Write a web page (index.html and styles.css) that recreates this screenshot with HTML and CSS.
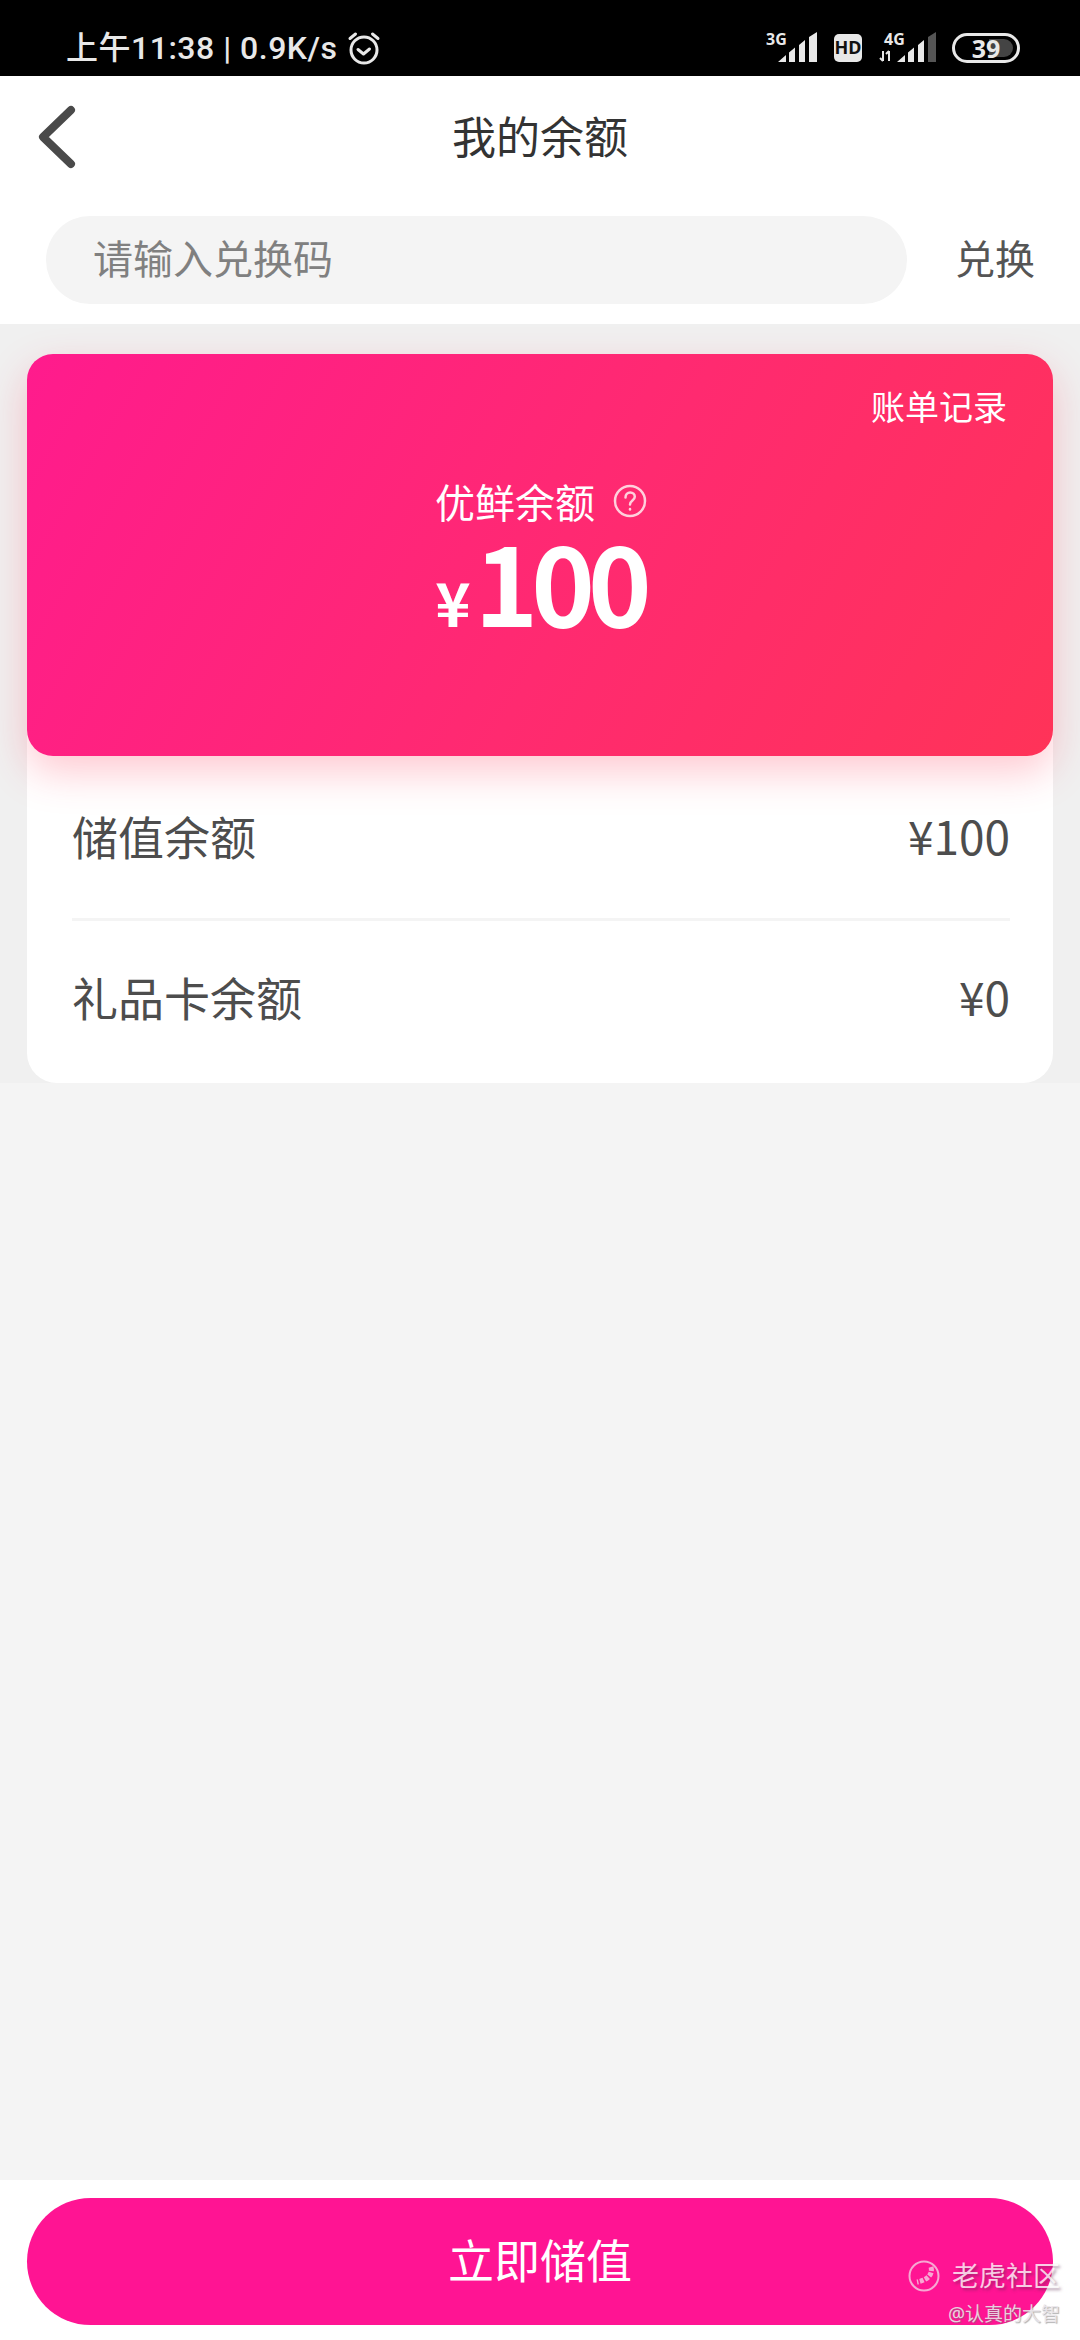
FILE: index.html
```html
<!DOCTYPE html>
<html lang="zh-CN">
<head>
    <meta charset="UTF-8">
    <meta name="viewport" content="width=device-width, initial-scale=1.0">
    <title>我的余额</title>
    <link rel="stylesheet" href="styles.css">
</head>
<body>
    <div class="status-bar">
        <div class="status-left">
            <span class="status-text">上午11:38 | 0.9K/s</span>
            <svg class="alarm" width="34" height="34" viewBox="0 0 34 34" fill="none" stroke="#e8e8e8" stroke-linecap="round" stroke-linejoin="round">
                <circle cx="17" cy="19" r="13" stroke-width="3"/>
                <path d="M11 18.500l5.500 4.500 6-5" stroke-width="3"/>
                <path d="M3 7.500L8.500 3M31 7.500L25.500 3" stroke-width="3"/>
            </svg>
        </div>
        <div class="status-right">
            <svg class="signal" width="53" height="40" viewBox="0 -8 53 40">
                <text class="net-label" x="0" y="13">3G</text>
                <path class="bar" d="M12 30l8-7v7zM23 30V20.500l6-5V30zM33 30V13l6-5V30zM43 30V5l8-5v30z"/>
            </svg>
            <svg width="28" height="28" viewBox="0 0 28 28">
                <rect width="28" height="28" rx="5" fill="#e8e8e8"/>
                <text class="hd-label" x="14" y="20" text-anchor="middle">HD</text>
            </svg>
            <svg class="signal" width="60" height="40" viewBox="0 -8 60 40">
                <text class="net-label" x="7" y="13">4G</text>
                <path d="M6 19v10M3 26l3 3M12 29V19M9 22l3-3" stroke="#e8e8e8" stroke-width="2" fill="none"/>
                <path class="bar" d="M20 30l8-7v7zM31 30V20.500l6-5V30zM41 30V13l6-5V30z"/>
                <path d="M51 30V5l8-5v30z" fill="#555"/>
            </svg>
            <div class="battery">
                <div class="battery-fill"></div>
                <span class="battery-num">39</span>
            </div>
        </div>
    </div>

    <div class="nav-bar">
        <svg class="back" width="40" height="66" viewBox="0 0 40 66" fill="none" stroke="#4a4a4a" stroke-width="8" stroke-linecap="round" stroke-linejoin="round">
            <path d="M34 6L6 33l28 27"/>
        </svg>
        <h1 class="nav-title">我的余额</h1>
    </div>

    <div class="redeem-row">
        <div class="redeem-input">请输入兑换码</div>
        <div class="redeem-btn">兑换</div>
    </div>

    <main class="content">
        <section class="balance-section">
            <div class="balance-card">
                <div class="bill-link">账单记录</div>
                <div class="balance-label">
                    <span>优鲜余额</span>
                    <svg width="34" height="34" viewBox="0 0 34 34" fill="none" stroke="#ffd0dc" stroke-width="2.500" stroke-linecap="round">
                        <circle cx="17" cy="17" r="15"/>
                        <path d="M12.500 13.500c0-3 2-5 4.700-5s4.600 1.800 4.600 4.300c0 3.700-4.800 3.800-4.800 7.700"/>
                        <path d="M17 25v.500"/>
                    </svg>
                </div>
                <div class="balance-amount"><span class="yen">¥</span><span class="amount-num">100</span></div>
            </div>
            <div class="detail-card">
                <div class="detail-row row-first">
                    <span>储值余额</span>
                    <span class="detail-value">¥100</span>
                </div>
                <div class="detail-row row-last">
                    <span>礼品卡余额</span>
                    <span class="detail-value">¥0</span>
                </div>
            </div>
        </section>
    </main>

    <footer class="footer">
        <div class="recharge-btn">立即储值</div>
    </footer>

    <!-- marca d'agua por cima do botao -->
    <div class="watermark">
        <div class="wm-top">
            <svg width="32" height="32" viewBox="0 0 32 32" fill="none" stroke="#f7a8d3" stroke-width="2">
                <circle cx="16" cy="16" r="14.500"/>
                <path d="M23 7c2 7-3 13-14 15" stroke-width="5" stroke-dasharray="4 1.500"/>
            </svg>
            <span class="wm-brand">老虎社区</span>
        </div>
        <div class="wm-user">@认真的大智</div>
    </div>
</body>
</html>
```

FILE: styles.css
```css
/* Pagina de saldo */
* {
    margin: 0;
    padding: 0;
    box-sizing: border-box;
}
body {
    position: relative;
    width: 1080px;
    height: 2340px;
    display: flex;
    flex-direction: column;
    overflow: hidden;
    background-color: #fff;
    color: #333;
    font-family: "Noto Sans", "Noto Sans CJK SC", sans-serif;
}

/* Barra de status */
.status-bar {
    height: 76px;
    flex-shrink: 0;
    display: flex;
    justify-content: space-between;
    align-items: center;
    padding: 20px 60px 0 66px;
    background-color: #000;
    color: #e8e8e8;
}
.status-left {
    display: flex;
    align-items: center;
    gap: 9px;
}
.status-text {
    padding-bottom: 6px;
    font-family: Roboto, "Noto Sans CJK SC", sans-serif;
    font-size: 32px;
    font-weight: 500;
    letter-spacing: 0.5px;
    white-space: nowrap;
}
.status-right {
    display: flex;
    align-items: center;
    gap: 15px;
}
.signal {
    margin-top: -8px;
}
.net-label {
    font-size: 16px;
    font-weight: 700;
    fill: #e8e8e8;
}
.hd-label {
    font-size: 18px;
    font-weight: 700;
    fill: #111;
}
.bar {
    fill: #e8e8e8;
}
.battery {
    position: relative;
    width: 68px;
    height: 30px;
    border: 3px solid #e8e8e8;
    border-radius: 15px;
    display: flex;
    align-items: center;
    justify-content: center;
}
.battery-fill {
    position: absolute;
    top: 3px;
    bottom: 3px;
    right: 4px;
    width: 24px;
    border-radius: 0 10px 10px 0;
    background-color: #444;
}
.battery-num {
    position: relative;
    font-size: 25px;
    font-weight: 700;
    line-height: 24px;
    color: #e8e8e8;
}

/* Topo */
.nav-bar {
    position: relative;
    height: 124px;
    flex-shrink: 0;
    display: flex;
    align-items: center;
    justify-content: center;
    padding-bottom: 6px;
}
.back {
    position: absolute;
    left: 37px;
    top: 28px;
}
.nav-title {
    font-size: 44px;
    font-weight: 400;
    color: #333;
}
.redeem-row {
    height: 124px;
    flex-shrink: 0;
    display: flex;
    align-items: flex-start;
    padding: 16px 45px 0 46px;
}
.redeem-input {
    width: 861px;
    height: 88px;
    padding-left: 47px;
    border-radius: 44px;
    background-color: #f4f4f4;
    color: #808080;
    font-size: 40px;
    line-height: 86px;
}
.redeem-btn {
    margin-left: auto;
    color: #555;
    font-size: 40px;
    line-height: 86px;
}

/* Conteudo */
.content {
    flex: 1;
    background-color: #f4f4f4;
}
.balance-section {
    padding: 30px 27px 0;
    background-color: #f0f0f0;
}
.balance-card {
    position: relative;
    z-index: 1;
    height: 402px;
    padding: 31px 46px 0;
    border-radius: 26px;
    background: linear-gradient(120deg, #ff1b8d 0%, #ff2a70 55%, #ff3358 100%);
    box-shadow: 0 16px 40px rgba(255, 60, 90, 0.28);
    color: #fff;
}
.bill-link {
    text-align: right;
    font-size: 34px;
    line-height: 44px;
}
.balance-label {
    margin-top: 47px;
    display: flex;
    justify-content: center;
    align-items: center;
    gap: 18px;
    height: 50px;
    padding-left: 2px;
    font-size: 40px;
}
.balance-amount {
    display: flex;
    justify-content: center;
    align-items: baseline;
    gap: 4px;
    margin-top: 4px;
    font-family: "Noto Sans CJK SC", "Noto Sans", sans-serif;
    font-weight: 700;
    line-height: 100px;
}
.yen {
    font-size: 60px;
}
.amount-num {
    font-size: 108px;
    letter-spacing: -7px;
}
.detail-card {
    margin-top: -30px;
    padding: 30px 43px 0 45px;
    border-radius: 0 0 30px 30px;
    background-color: #fff;
    color: #4d4d4d;
    font-size: 46px;
}
.detail-row {
    display: flex;
    justify-content: space-between;
    align-items: center;
}
.row-first {
    height: 165px;
    padding-bottom: 4px;
    border-bottom: 3px solid #f4f4f4;
}
.row-last {
    height: 162px;
    padding-bottom: 12px;
}
.detail-value {
    font-family: "Noto Sans CJK SC", "Noto Sans", sans-serif;
    font-size: 46px;
}

/* Rodape */
.footer {
    height: 160px;
    flex-shrink: 0;
    padding: 18px 27px 0;
    background-color: #fff;
}
.recharge-btn {
    height: 127px;
    border-radius: 64px;
    background-color: #ff1493;
    color: #fff;
    font-size: 46px;
    line-height: 125px;
    text-align: center;
}

/* Marca d'agua */
.watermark {
    position: absolute;
    right: 20px;
    bottom: 12px;
    display: flex;
    flex-direction: column;
    align-items: flex-end;
}
.wm-top {
    display: flex;
    align-items: center;
    gap: 12px;
}
.wm-brand {
    font-size: 27px;
    line-height: 36px;
    color: rgba(255, 255, 255, 0.78);
    text-shadow: 2px 2px 3px rgba(90, 40, 80, 0.5);
}
.wm-user {
    margin-top: 6px;
    font-size: 19px;
    line-height: 28px;
    color: rgba(235, 230, 235, 0.9);
    text-shadow: 1px 1px 1px rgba(110, 110, 110, 0.55);
}
```
